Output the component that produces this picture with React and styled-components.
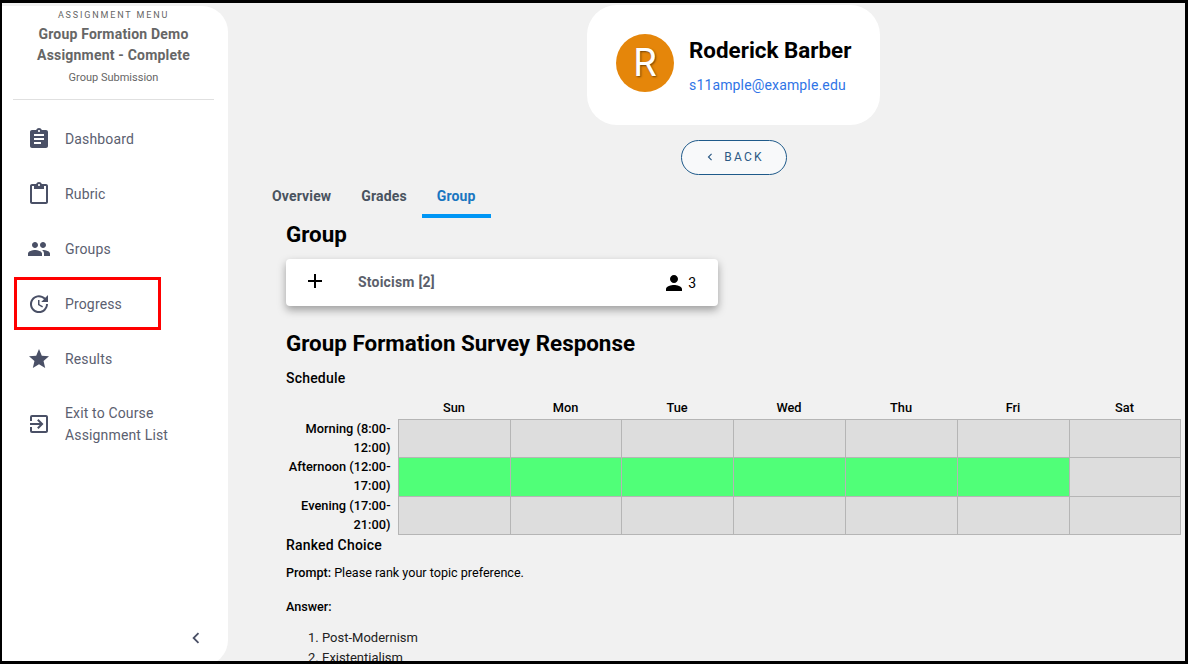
import React from "react";
import styled, { createGlobalStyle } from "styled-components";
import {
  MdAssignment,
  MdContentPaste,
  MdPeople,
  MdUpdate,
  MdStar,
  MdExitToApp,
  MdChevronLeft,
  MdAdd,
  MdPerson,
} from "react-icons/md";

const GlobalStyle = createGlobalStyle`
  html, body {
    margin: 0;
    padding: 0;
    background: #fff;
    overflow: hidden;
    font-family: Roboto, "Liberation Sans", sans-serif;
  }
`;

const Frame = styled.div`
  box-sizing: border-box;
  width: 1188px;
  height: 664px;
  border-style: solid;
  border-color: #000;
  border-width: 3px 3px 3px 2px;
  background: #f1f1f1;
  display: flex;
  overflow: hidden;
`;

const Sidebar = styled.aside`
  flex: 0 0 226px;
  height: 660px;
  margin-top: 3px;
  background: #fff;
  border-radius: 0 26px 26px 0;
  display: flex;
  flex-direction: column;
`;

const SideHeader = styled.div`
  margin: 0 14px 0 11px;
  height: 93px;
  border-bottom: 1px solid #e0e0e0;
  text-align: center;
  color: #666;
`;

const MenuLabel = styled.div`
  font-size: 9px;
  line-height: 16px;
  letter-spacing: 1.85px;
  margin-top: 1px;
`;

const AssignmentTitle = styled.div`
  font-size: 14px;
  font-weight: 700;
  line-height: 21px;
  letter-spacing: 0.2px;
  margin-top: 1px;
`;

const AssignmentSub = styled.div`
  font-size: 11px;
  line-height: 16px;
  margin-top: 4px;
`;

const Nav = styled.nav`
  display: flex;
  flex-direction: column;
  padding-top: 11px;
`;

const NavItem = styled.a`
  position: relative;
  display: flex;
  align-items: center;
  height: 55px;
  margin-top: ${(p) => (p.$spaced ? "10px" : "0")};
  padding-left: 25px;
  color: #5b6070;
  font-size: 14px;
  line-height: 22px;
  letter-spacing: 0.15px;

  svg {
    flex: none;
    width: 24px;
    height: 24px;
    margin-right: 14px;
    color: #4a5066;
  }
`;

const Highlight = styled.span`
  position: absolute;
  box-sizing: border-box;
  left: 12px;
  top: 1px;
  width: 147px;
  height: 53px;
  border: 3px solid #ff0000;
`;

const Collapse = styled.div`
  margin-top: auto;
  display: flex;
  justify-content: flex-end;
  padding: 0 21px 17px 0;
  color: #4a5066;
`;

const Main = styled.main`
  flex: 1;
  min-width: 0;
  padding: 2px 4px 0 29px;
`;

const Header = styled.header`
  margin-left: 29px;
  display: flex;
  flex-direction: column;
  align-items: center;
`;

const ProfileCard = styled.div`
  box-sizing: border-box;
  width: 293px;
  height: 120px;
  padding-left: 29px;
  background: #fff;
  border-radius: 30px;
  display: flex;
  align-items: center;
  gap: 15px;
`;

const Avatar = styled.div`
  width: 58px;
  height: 58px;
  margin-top: -4px;
  border-radius: 50%;
  background: #e5860a;
  color: #fff;
  font-size: 38px;
  line-height: 58px;
  text-align: center;
  text-shadow: 1px 1px 2px rgba(0, 0, 0, 0.5);
`;

const ProfileName = styled.div`
  margin-top: 1px;
  font-size: 22.4px;
  font-weight: 700;
  line-height: 28px;
  color: #000;
`;

const ProfileEmail = styled.div`
  font-size: 14px;
  line-height: 20px;
  margin-top: 11px;
  color: #2f74e6;
  letter-spacing: 0.15px;
`;

const BackButton = styled.button`
  box-sizing: border-box;
  width: 106px;
  height: 35px;
  margin-top: 15px;
  border: 1px solid #1f5a8a;
  border-radius: 18px;
  background: #f8f9fa;
  color: #2c5a85;
  font-family: inherit;
  font-size: 12px;
  letter-spacing: 2.2px;
  display: flex;
  align-items: center;
  justify-content: center;
  gap: 7px;
  padding: 0 0 2px;
`;

const Tabs = styled.div`
  display: flex;
`;

const Tab = styled.div`
  box-sizing: border-box;
  height: 43px;
  padding: 3px 15px 0;
  display: flex;
  align-items: center;
  font-size: 14px;
  font-weight: 700;
  letter-spacing: 0.15px;
  color: ${(p) => (p.$active ? "#1976c0" : "#49535f")};
  border-bottom: 4px solid ${(p) => (p.$active ? "#0096f5" : "transparent")};
`;

const Body = styled.div`
  padding-left: 29px;
`;

const Heading = styled.h2`
  margin: ${(p) => p.$top} 0 0;
  font-size: 22.4px;
  font-weight: 700;
  line-height: 28px;
  color: #000;
`;

const GroupCard = styled.div`
  box-sizing: border-box;
  width: 432px;
  height: 47px;
  margin-top: 11px;
  padding: 0 22px 0 17px;
  background: #fff;
  border-radius: 4px;
  box-shadow: 0 4px 8px rgba(0, 0, 0, 0.35);
  display: flex;
  align-items: center;
`;

const PlusSlot = styled.div`
  width: 55px;
  display: flex;
  margin-top: -4px;
  color: #000;
`;

const GroupName = styled.div`
  flex: 1;
  margin-top: -2px;
  font-size: 14px;
  font-weight: 700;
  letter-spacing: 0.2px;
  color: #5b5f6b;
`;

const Members = styled.div`
  display: flex;
  align-items: center;
  gap: 2px;
  font-size: 14px;
  color: #000;
`;

const SubHeading = styled.h3`
  margin: ${(p) => p.$top} 0 0;
  font-size: 14px;
  font-weight: 500;
  line-height: 20px;
  letter-spacing: 0.2px;
  color: #000;
`;

const Schedule = styled.table`
  width: 894px;
  margin-top: 7px;
  border-collapse: collapse;
  table-layout: fixed;
`;

const DayHead = styled.th`
  height: 23px;
  padding: 1px 0 0;
  font-size: 12.8px;
  line-height: 16px;
  font-weight: 500;
  color: #000;
`;

const SlotRow = styled.tr`
  height: ${(p) => p.$height}px;
`;

const SlotLabel = styled.th`
  padding: 0 7px 0 0;
  vertical-align: top;
  transform: translateY(-1px);
  font-size: 12.8px;
  font-weight: 500;
  line-height: 19px;
  text-align: right;
  color: #000;
`;

const Slot = styled.td`
  padding: 0;
  border: 1px solid #b5b5b5;
  background: ${(p) => (p.$on ? "#50ff78" : "#dddddd")};
`;

const Text = styled.p`
  margin: ${(p) => p.$top} 0 0;
  font-size: 12.6px;
  line-height: 20px;
  color: #000;

  b {
    font-weight: 500;
  }
`;

const Answers = styled.ol`
  margin: 11px 0 0;
  padding-left: 36px;
  font-size: 13px;
  line-height: 20px;
  color: #222;
`;

const colWidths = [112, 112, 111, 112, 112, 112, 112, 111];
const days = ["Sun", "Mon", "Tue", "Wed", "Thu", "Fri", "Sat"];
const slots = [
  { label: "Morning (8:00-12:00)", height: 38, on: [] },
  { label: "Afternoon (12:00-17:00)", height: 39, on: [0, 1, 2, 3, 4, 5] },
  { label: "Evening (17:00-21:00)", height: 38, on: [] },
];

export default function App() {
  return (
    <Frame>
      <GlobalStyle />
      <Sidebar>
        <SideHeader>
          <MenuLabel>ASSIGNMENT MENU</MenuLabel>
          <AssignmentTitle>Group Formation Demo Assignment - Complete</AssignmentTitle>
          <AssignmentSub>Group Submission</AssignmentSub>
        </SideHeader>
        <Nav>
          <NavItem><MdAssignment />Dashboard</NavItem>
          <NavItem><MdContentPaste />Rubric</NavItem>
          <NavItem><MdPeople />Groups</NavItem>
          <NavItem><Highlight /><MdUpdate />Progress</NavItem>
          <NavItem><MdStar />Results</NavItem>
          <NavItem $spaced><MdExitToApp /><span>Exit to Course<br />Assignment List</span></NavItem>
        </Nav>
        <Collapse><MdChevronLeft size={22} /></Collapse>
      </Sidebar>
      <Main>
        <Header>
          <ProfileCard>
            <Avatar>R</Avatar>
            <div>
              <ProfileName>Roderick Barber</ProfileName>
              <ProfileEmail>s11ample@example.edu</ProfileEmail>
            </div>
          </ProfileCard>
          <BackButton><MdChevronLeft size={14} />BACK</BackButton>
        </Header>
        <Tabs>
          <Tab>Overview</Tab>
          <Tab>Grades</Tab>
          <Tab $active>Group</Tab>
        </Tabs>
        <Body>
          <Heading $top="2px">Group</Heading>
          <GroupCard>
            <PlusSlot><MdAdd size={24} /></PlusSlot>
            <GroupName>Stoicism [2]</GroupName>
            <Members><MdPerson size={24} />3</Members>
          </GroupCard>
          <Heading $top="23px">Group Formation Survey Response</Heading>
          <SubHeading $top="11px">Schedule</SubHeading>
          <Schedule>
            <colgroup>
              {colWidths.map((w, i) => <col key={i} width={w} />)}
            </colgroup>
            <thead>
              <tr>
                <DayHead as="td" />
                {days.map((d) => <DayHead key={d}>{d}</DayHead>)}
              </tr>
            </thead>
            <tbody>
              {slots.map((s) => (
                <SlotRow key={s.label} $height={s.height}>
                  <SlotLabel>{s.label}</SlotLabel>
                  {days.map((d, i) => <Slot key={d} $on={s.on.includes(i)} />)}
                </SlotRow>
              ))}
            </tbody>
          </Schedule>
          <SubHeading $top="0px">Ranked Choice</SubHeading>
          <Text $top="8px"><b>Prompt:</b> Please rank your topic preference.</Text>
          <Text $top="14px"><b>Answer:</b></Text>
          <Answers>
            <li>Post-Modernism</li>
            <li>Existentialism</li>
          </Answers>
        </Body>
      </Main>
    </Frame>
  );
}
